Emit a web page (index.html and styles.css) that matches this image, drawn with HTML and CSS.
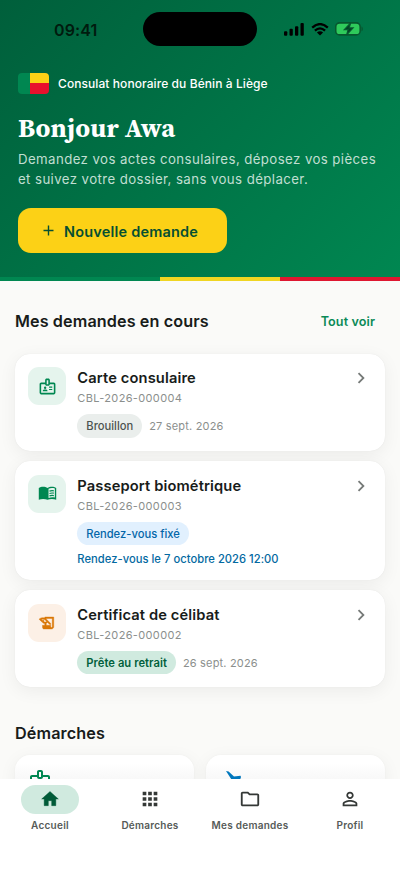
FILE: index.html
```html
<!DOCTYPE html>
<html lang="fr">
<head>
<meta charset="utf-8">
<meta name="viewport" content="width=device-width, initial-scale=1">
<title>Consulat honoraire du Bénin à Liège</title>
<link rel="stylesheet" href="styles.css">
</head>
<body>
<svg class="defs" width="0" height="0" aria-hidden="true">
  <symbol id="badge" viewBox="0 0 24 24">
    <path d="M20 7h-5V4c0-1.1-.9-2-2-2h-2c-1.1 0-2 .9-2 2v3H4c-1.1 0-2 .9-2 2v11c0 1.100.9 2 2 2h16c1.100 0 2-.9 2-2V9c0-1.100-.9-2-2-2zM11 4h2v5h-2V4zm9 16H4V9h5c0 1.100.9 2 2 2h2c1.100 0 2-.9 2-2h5v11z" fill-rule="evenodd"/>
    <circle cx="9" cy="13.500" r="1.500"/>
    <path d="M11.080 16.180C10.440 15.900 9.740 15.750 9 15.750s-1.440.15-2.080.43c-.56.24-.92.79-.92 1.390V18h6v-.43c0-.6-.36-1.150-.92-1.390zM14 15h4v1.500h-4zM14 12h4v1.500h-4z"/>
  </symbol>
  <symbol id="chevron" viewBox="0 0 24 24"><path d="M10 6 8.590 7.410 13.170 12l-4.580 4.590L10 18l6-6z"/></symbol>
</svg>
<div class="app">
  <main class="content">
    <header class="hero">
      <div class="status">
        <span class="time">09:41</span>
        <span class="island"></span>
        <span class="indicators">
          <svg width="21" height="13" viewBox="0 0 21 13"><rect x="0" y="8.300" width="3.300" height="4.400" rx="1"/><rect x="5.500" y="5.800" width="3.300" height="6.900" rx="1"/><rect x="11" y="3.200" width="3.300" height="9.500" rx="1"/><rect x="16.500" y="0" width="3.300" height="12.700" rx="1"/></svg>
          <svg class="wifi" width="18" height="13" viewBox="0 0 18 13"><g fill="none" stroke="#000" stroke-width="2.300"><path d="M1.200 4.700Q9-2.500 16.800 4.700"/><path d="M3.900 7.700Q9 3 14.100 7.700"/></g><path d="M5.900 9.500Q9 7 12.100 9.500L9 12.600Z"/></svg>
          <svg class="battery" width="29" height="14" viewBox="0 0 29 14"><rect x=".7" y=".9" width="24.500" height="12" rx="4" fill="#2fca5b" stroke="#07572f" stroke-width="1.600"/><path d="M26.500 4.500c1.800.5 1.800 4.300 0 4.800z" fill="#07572f"/><path d="M15.600 1 9.300 7.700h3.800l-1.500 5.200 6.500-7h-3.900z" fill="#003f22" stroke="#07572f" stroke-width="1.200"/></svg>
        </span>
      </div>
      <div class="brand">
        <span class="flag"><i></i><i></i><i></i></span>
        <span class="brand-name">Consulat honoraire du Bénin à Liège</span>
      </div>
      <h1>Bonjour Awa</h1>
      <p class="intro">Demandez vos actes consulaires, déposez vos pièces<br>et suivez votre dossier, sans vous déplacer.</p>
      <button class="cta"><svg width="11" height="11" viewBox="0 0 11 11"><path d="M5.500.5v10M.5 5.500h10" stroke="#064f32" stroke-width="1.400"/></svg><span>Nouvelle demande</span></button>
    </header>
    <div class="stripe"><i></i><i></i><i></i></div>

    <section class="section">
      <div class="section-head"><h2>Mes demandes en cours</h2><a class="more">Tout voir</a></div>
      <div class="list">
        <article class="card">
          <span class="tile green"><svg width="19" height="19"><use href="#badge"/></svg></span>
          <div class="info">
            <h3>Carte consulaire</h3>
            <p class="ref">CBL-2026-000004</p>
            <div class="meta"><span class="chip grey">Brouillon</span><span class="date">27 sept. 2026</span></div>
          </div>
          <svg class="chev" width="22" height="22"><use href="#chevron"/></svg>
        </article>
        <article class="card tall">
          <span class="tile green"><svg width="19" height="19" viewBox="0 0 24 24"><path d="M1 5c3-2 8-2 11 0 3-2 8-2 11 0v15c-3-1.600-8-1.600-11 0-3-1.600-8-1.600-11 0z"/><path d="M13.300 6c2.300-1.200 5.300-1.300 8-.4v11.500c-2.700-.7-5.700-.5-8 .6z" fill="#e5f4ed"/><path d="M14.500 9c1.700-.7 3.700-.8 5.500-.4M14.500 12c1.700-.7 3.700-.8 5.500-.4M14.500 15c1.700-.7 3.700-.8 5.500-.4" fill="none" stroke="#008751" stroke-width="1.500"/></svg></span>
          <div class="info">
            <h3>Passeport biométrique</h3>
            <p class="ref">CBL-2026-000003</p>
            <div class="meta"><span class="chip blue">Rendez-vous fixé</span></div>
            <p class="appointment">Rendez-vous le 7 octobre 2026 12:00</p>
          </div>
          <svg class="chev" width="22" height="22"><use href="#chevron"/></svg>
        </article>
        <article class="card">
          <span class="tile orange"><svg width="18" height="18" viewBox="0 0 24 24"><path fill-rule="evenodd" stroke-width=".5" stroke="#d97706" d="M9 4v1.380c-.83-.33-1.720-.5-2.610-.5-1.790 0-3.580.68-4.950 2.050l3.330 3.330h1.110v1.110c.86.86 1.980 1.310 3.110 1.360V15H6v3c0 1.100.9 2 2 2h10c1.660 0 3-1.340 3-3V4H9zm-1.110 6.410V8.260H5.610L4.570 7.220a5.070 5.070 0 0 1 1.820-.34c1.340 0 2.590.52 3.540 1.460l1.410 1.410-.2.2c-.51.51-1.190.8-1.920.8-.47 0-.93-.12-1.330-.34zM19 17c0 .55-.45 1-1 1s-1-.45-1-1v-2h-6v-2.590c.57-.23 1.100-.57 1.560-1.030l.2-.2L15.590 14H17v-1.410l-6-5.970V6h8v11z"/></svg></span>
          <div class="info">
            <h3>Certificat de célibat</h3>
            <p class="ref">CBL-2026-000002</p>
            <div class="meta"><span class="chip mint">Prête au retrait</span><span class="date">26 sept. 2026</span></div>
          </div>
          <svg class="chev" width="22" height="22"><use href="#chevron"/></svg>
        </article>
      </div>
    </section>

    <section class="procedures">
      <h2>Démarches</h2>
      <div class="grid">
        <div class="proc"><svg width="24" height="24"><use href="#badge"/></svg></div>
        <div class="proc plane"><svg width="24" height="24" viewBox="0 0 24 24"><path d="M1 3l2.600.6 5.400 5 6.500-.9.500 1.300L14 15l-4 2z"/></svg></div>
      </div>
    </section>
  </main>

  <nav class="tabs">
    <a class="tab active"><span class="pill"><svg width="20" height="20" viewBox="0 0 24 24"><path d="M10 20v-6h4v6h5v-8h3L12 3 2 12h3v8z" stroke="#005b38" stroke-width=".5" stroke-linejoin="round"/></svg></span><span class="label">Accueil</span></a>
    <a class="tab"><span class="pill"><svg width="22" height="22" viewBox="0 0 24 24"><path d="M4 4h4v4H4zM10 4h4v4h-4zM16 4h4v4h-4zM4 10h4v4H4zM10 10h4v4h-4zM16 10h4v4h-4zM4 16h4v4H4zM10 16h4v4h-4zM16 16h4v4h-4z"/></svg></span><span class="label">Démarches</span></a>
    <a class="tab"><span class="pill"><svg width="22" height="22" viewBox="0 0 24 24"><path d="M9.170 6l2 2H20v10H4V6h5.170M10 4H4c-1.100 0-1.990.9-1.990 2L2 18c0 1.100.9 2 2 2h16c1.100 0 2-.9 2-2V8c0-1.100-.9-2-2-2h-8l-2-2z"/></svg></span><span class="label">Mes demandes</span></a>
    <a class="tab"><span class="pill"><svg width="22" height="22" viewBox="0 0 24 24"><path d="M12 5.900c1.160 0 2.100.94 2.100 2.100s-.94 2.100-2.100 2.100S9.900 9.160 9.900 8s.94-2.100 2.100-2.100m0 9c2.970 0 6.100 1.460 6.100 2.100v1.100H5.900V17c0-.64 3.130-2.100 6.100-2.100M12 4C9.790 4 8 5.790 8 8s1.790 4 4 4 4-1.790 4-4-1.790-4-4-4zm0 9c-2.670 0-8 1.340-8 4v3h16v-3c0-2.660-5.330-4-8-4z"/></svg></span><span class="label">Profil</span></a>
  </nav>
</div>
</body>
</html>
```
FILE: styles.css
```css
* { box-sizing: border-box; }
body { margin: 0; font-family: Inter, "Liberation Sans", sans-serif; color: #181c1a; background: #fff; }
h1, h2, h3, p { margin: 0; }
svg { display: block; flex: none; }
.defs { display: none; }
.app { display: flex; flex-direction: column; width: 400px; height: 869px; overflow: hidden; }
.content { flex: 1; min-height: 0; overflow: hidden; background: #fafaf8; }

.hero { height: 277px; padding: 12px 18px 0; background: linear-gradient(135deg, #005f3b 0%, #008751 100%); color: #fff; }
.status { display: grid; grid-template-columns: 125px 114px 1fr; align-items: center; height: 34px; }
.time { padding-left: 36px; padding-top: 2px; color: #001b0e; font-size: 16px; font-weight: 600; letter-spacing: .1px; }
.island { height: 34px; border-radius: 17px; background: #000; }
.indicators { display: flex; align-items: center; padding-left: 27px; }
.wifi { margin-left: 6px; }
.battery { margin-left: 6px; }
.brand { display: flex; align-items: center; gap: 9px; margin-top: 26px; height: 22px; }
.flag { display: grid; grid-template: 1fr 1fr / 12px 19px; width: 31px; height: 21px; border-radius: 4px; overflow: hidden; }
.flag i:nth-child(1) { grid-row: span 2; background: #008751; }
.flag i:nth-child(2) { background: #fcd116; }
.flag i:nth-child(3) { background: #e8112d; }
.brand-name { font-size: 12px; font-weight: 500; letter-spacing: .08px; }
h1 { margin-top: 18px; height: 32px; line-height: 32px; font-family: "Source Serif 4", "Liberation Serif", serif; font-size: 26.300px; font-weight: 700; letter-spacing: .2px; white-space: nowrap; }
.intro { margin-top: 5px; font-size: 13.250px; line-height: 20px; letter-spacing: .4px; color: #c0dfd2; white-space: nowrap; }
.cta { display: flex; align-items: center; gap: 10px; width: 209px; height: 45px; margin-top: 19px; padding: 1px 0 0 25px; border: 0; border-radius: 13px; background: #fcd116; color: #064f32; font: 600 14.500px Inter, "Liberation Sans", sans-serif; letter-spacing: .2px; white-space: nowrap; }
.cta svg { margin-top: -2px; }
.stripe { display: grid; grid-template-columns: 4fr 3fr 3fr; height: 4px; }
.stripe i:nth-child(1) { background: #008751; }
.stripe i:nth-child(2) { background: #f0d522; }
.stripe i:nth-child(3) { background: #de1730; }

.section { padding: 28px 15px 0; }
.section-head { display: flex; justify-content: space-between; align-items: center; height: 24px; padding-right: 10px; }
h2 { font-size: 16.200px; line-height: 24px; font-weight: 580; letter-spacing: .1px; white-space: nowrap; }
.more { color: #0a8a57; font-size: 12.600px; font-weight: 600; letter-spacing: .1px; }
.list { display: flex; flex-direction: column; gap: 10px; margin-top: 20.500px; }
.card { display: flex; gap: 11.300px; height: 97px; padding: 13.500px 13px 0 13px; border-radius: 15px; background: #fff; box-shadow: 0 0 1px rgba(0, 0, 0, .1), 0 4px 18px rgba(0, 0, 0, .06); }
.card.tall { height: 119px; }
.card + .card { padding-top: 14px; }
.tile { display: grid; place-items: center; flex: none; width: 38px; height: 38px; border-radius: 11px; }
.tile.green { background: #e5f4ed; fill: #008751; }
.tile.orange { background: #fcf0e6; fill: #d97706; }
.info { flex: 1; white-space: nowrap; }
h3 { font-size: 14.700px; line-height: 22px; font-weight: 580; letter-spacing: .12px; }
.ref { margin-top: 1px; font-size: 11px; line-height: 17px; color: #8b8f8d; letter-spacing: .35px; }
.meta { display: flex; align-items: center; gap: 7px; margin-top: 7px; height: 24px; }
.chip { height: 23.500px; padding: 0 9px; border-radius: 12px; font-size: 11.200px; line-height: 24px; font-weight: 500; }
.grey { background: #eaeeec; color: #4c5350; }
.blue { background: #e1f0fe; color: #0366a8; }
.mint { background: #d0eadf; color: #005f3b; font-weight: 580; letter-spacing: .05px; }
.date { font-size: 11px; color: #8b8f8d; letter-spacing: .18px; }
.appointment { margin-top: 5px; font-size: 11.200px; line-height: 17px; font-weight: 500; color: #0369a1; letter-spacing: .03px; }
.chev { fill: #767a78; }

.procedures { padding: 34px 15px 0; }
.grid { display: grid; grid-template-columns: 1fr 1fr; gap: 12px; margin-top: 10px; }
.proc { height: 100px; padding: 13px 13px; border-radius: 15px; background: linear-gradient(#fff, #fff 8px, #f8f8f8 24px); box-shadow: 0 0 1px rgba(0, 0, 0, .1), 0 4px 18px rgba(0, 0, 0, .06); fill: #008751; }
.plane { fill: #0077bd; padding-left: 19px; }

.tabs { display: grid; grid-template-columns: repeat(4, 1fr); flex: none; height: 90px; padding-top: 5.500px; background: #fff; }
.tab { display: flex; flex-direction: column; align-items: center; fill: #343836; }
.pill { display: grid; place-items: center; width: 58px; height: 29px; border-radius: 15px; }
.active .pill { background: #d0eadf; fill: #005b38; }
.label { margin-top: 4.500px; font-size: 10px; line-height: 14px; font-weight: 580; color: #565b58; letter-spacing: .25px; white-space: nowrap; }
```
